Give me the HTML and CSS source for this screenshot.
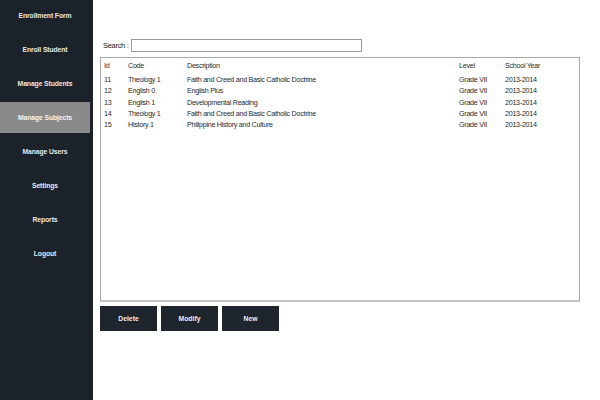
FILE: index.html
```html
<!DOCTYPE html>
<html>
<head>
<meta charset="utf-8">
<link rel="stylesheet" href="styles.css">
</head>
<body>
<div class="app">
  <nav class="sidebar">
    <div class="nav-item">Enrollment Form</div>
    <div class="nav-item">Enroll Student</div>
    <div class="nav-item">Manage Students</div>
    <div class="nav-item active">Manage Subjects</div>
    <div class="nav-item">Manage Users</div>
    <div class="nav-item">Settings</div>
    <div class="nav-item">Reports</div>
    <div class="nav-item">Logout</div>
  </nav>
  <main class="main">
    <div class="search-row">
      <label class="search-label">Search :</label>
      <input class="search-input" type="text">
    </div>
    <div class="list">
      <table class="grid">
        <colgroup>
          <col class="c-id"><col class="c-code"><col class="c-desc"><col class="c-level"><col class="c-year">
        </colgroup>
        <thead>
          <tr><th>Id</th><th>Code</th><th>Description</th><th>Level</th><th>School Year</th></tr>
        </thead>
        <tbody>
          <tr><td>11</td><td>Theology 1</td><td>Faith and Creed and Basic Catholic Doctrine</td><td>Grade VII</td><td>2013-2014</td></tr>
          <tr><td>12</td><td>English 0</td><td>English Plus</td><td>Grade VII</td><td>2013-2014</td></tr>
          <tr><td>13</td><td>English 1</td><td>Developmental Reading</td><td>Grade VII</td><td>2013-2014</td></tr>
          <tr><td>14</td><td>Theology 1</td><td>Faith and Creed and Basic Catholic Doctrine</td><td>Grade VII</td><td>2013-2014</td></tr>
          <tr><td>15</td><td>History 1</td><td>Philippine History and Culture</td><td>Grade VII</td><td>2013-2014</td></tr>
        </tbody>
      </table>
    </div>
    <div class="actions">
      <button class="btn">Delete</button>
      <button class="btn">Modify</button>
      <button class="btn">New</button>
    </div>
  </main>
</div>
</body>
</html>
```

FILE: styles.css
```css
html, body {
  margin: 0;
  padding: 0;
  background: #ffffff;
  font-family: "Liberation Sans", Arial, sans-serif;
}
.app {
  display: flex;
  width: 600px;
  height: 400px;
}
.sidebar {
  width: 93px;
  flex: 0 0 93px;
  background: #1b222a;
  display: flex;
  flex-direction: column;
  gap: 3px;
}
.nav-item {
  width: 90px;
  height: 31px;
  display: flex;
  align-items: center;
  justify-content: center;
  color: #e8e8e8;
  font-size: 6.8px;
  font-weight: bold;
  letter-spacing: -0.1px;
}
.nav-item:first-child {
  padding-bottom: 1px;
  box-sizing: border-box;
}
.nav-item.active {
  background: #8a8a88;
  color: #f4f4f4;
}
.main {
  flex: 1;
  padding: 39px 0 0 7px;
  display: flex;
  flex-direction: column;
}
.search-row {
  display: flex;
  align-items: center;
  height: 13px;
  margin-bottom: 5px;
}
.search-label {
  width: 28px;
  padding-left: 3px;
  font-size: 7.5px;
  color: #222;
  letter-spacing: -0.3px;
}
.search-input {
  box-sizing: border-box;
  width: 231px;
  height: 13px;
  margin: 0;
  padding: 0;
  border: 1px solid #9a9a9a;
  background: #fff;
}
.list {
  box-sizing: border-box;
  width: 480px;
  height: 245px;
  border: 1px solid #a8a8a8;
  border-bottom: 2px solid #c4c4c4;
  background: #fff;
  padding: 2px 0 0 3px;
}
.grid {
  border-collapse: collapse;
  table-layout: fixed;
  width: 470px;
  font-size: 7.2px;
  color: #2a2a2a;
  letter-spacing: -0.3px;
}
.c-id { width: 24px; }
.c-code { width: 59px; }
.c-desc { width: 272px; }
.c-level { width: 46px; }
.c-year { width: 69px; }
.grid th {
  font-weight: normal;
  text-align: left;
  height: 11px;
  padding: 0 0 3px 0;
  white-space: nowrap;
}
.grid td {
  height: 11.3px;
  padding: 0;
  white-space: nowrap;
}
.actions {
  display: flex;
  gap: 4px;
  margin-top: 4px;
}
.btn {
  width: 57px;
  height: 25px;
  border: none;
  background: #1e252c;
  color: #eeeeee;
  font-family: "Liberation Sans", Arial, sans-serif;
  font-size: 6.8px;
  font-weight: bold;
  padding: 0;
}
```
